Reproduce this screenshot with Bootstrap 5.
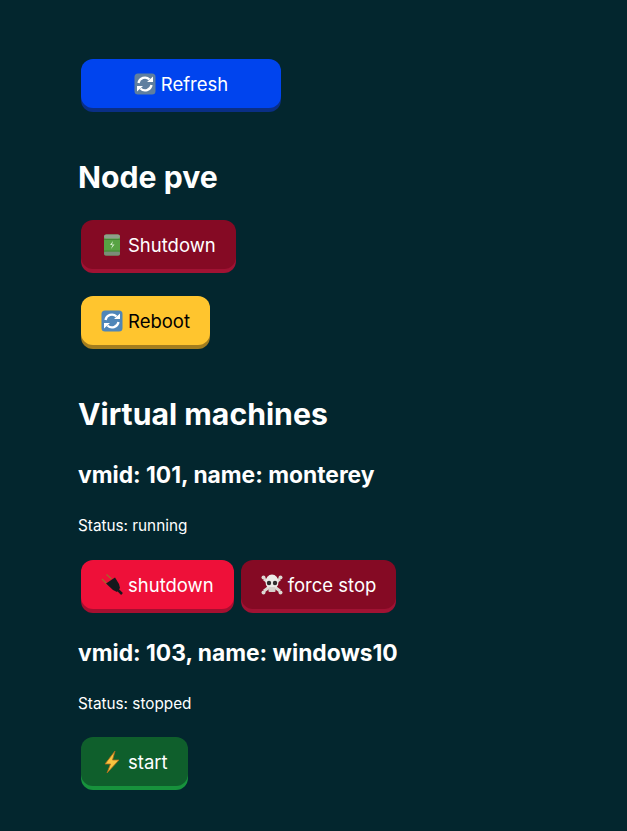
<!DOCTYPE html>
<html lang="en">
<head>
<meta charset="utf-8">
<title>Proxmox</title>
<link href="https://cdn.jsdelivr.net/npm/bootstrap@5.3.0/dist/css/bootstrap.min.css" rel="stylesheet">
<style>
html,body{height:100%}
body{background:#03262e;color:#fff;font-family:Inter,"Liberation Sans",sans-serif;}
.page-wrap{padding:59px 0 0 78px}
.act-row{display:flex;gap:7px;padding-left:3px}
.act{display:inline-flex;align-items:center;justify-content:center;gap:5px;height:49px;padding:0 20px;border:0;border-radius:12px;font-size:18.5px;font-weight:430;color:#fff;line-height:1}
.act span{position:relative;top:1px}
.act svg{width:22px;height:22px;flex:none}
.act-wide{width:200px}
.act-blue,.act-blue:hover{background:#0044ee;color:#fff;box-shadow:0 4px 0 #0a2f86}
.act-maroon,.act-maroon:hover{background:#850a24;color:#fff;box-shadow:0 4px 0 #a01233}
.act-yellow,.act-yellow:hover{background:#ffc52e;color:#000;box-shadow:0 4px 0 #a37d1e}
.act-red,.act-red:hover{background:#ee1039;color:#fff;box-shadow:0 4px 0 #a60f30}
.act-green,.act-green:hover{background:#0f5f2c;color:#fff;box-shadow:0 4px 0 #17923c}
.head-a{font-size:30.2px;font-weight:700;line-height:36px;margin:0}
.head-b{font-size:22.8px;font-weight:700;line-height:28px;margin:0}
.stat{font-size:15.3px;line-height:20px;margin:0}
.mt-a{margin-top:51px}.mt-b{margin-top:25px}.mt-c{margin-top:27px}
.mt-d{margin-top:51px}.mt-e{margin-top:29px}.mt-f{margin-top:27px}.mt-g{margin-top:24px}.mt-h{margin-top:30px}.mt-i{margin-top:23px}
</style>
</head>
<body>
<div class="page-wrap">
  <div class="act-row">
    <button type="button" class="btn act act-wide act-blue"><svg viewBox="0 0 22 22"><rect x="0.500" y="0.500" width="21" height="21" rx="3.500" fill="#5f7f9f"/><path d="M4.500 10a6.500 6.500 0 0 1 11-3.500" fill="none" stroke="#fff" stroke-width="2.300"/><path d="M17.500 12a6.500 6.500 0 0 1-11 3.500" fill="none" stroke="#fff" stroke-width="2.300"/><path d="M13 9h6V3.500zM9 13H3v5.500z" fill="#fff"/></svg><span>Refresh</span></button>
  </div>
  <h2 class="head-a mt-a">Node pve</h2>
  <div class="act-row mt-b">
    <button type="button" class="btn act act-maroon"><svg viewBox="0 0 22 22"><rect x="3" y="0.500" width="16" height="21" rx="2.500" fill="#58a344"/><rect x="3" y="0.500" width="16" height="4" rx="2" fill="#8f9f8c"/><rect x="3" y="17.500" width="16" height="4" rx="2" fill="#7b8c78"/><path d="M3 5.500h16M3 17h16" stroke="#3f7f33" stroke-width=".8"/><path d="M12 7 9 11h2.500L10 15l3.500-4.500H11z" fill="#d8f0d0"/></svg><span>Shutdown</span></button>
  </div>
  <div class="act-row mt-c">
    <button type="button" class="btn act act-yellow"><svg viewBox="0 0 22 22"><rect x="0.500" y="0.500" width="21" height="21" rx="3.500" fill="#4f86b8"/><path d="M4.500 10a6.500 6.500 0 0 1 11-3.500" fill="none" stroke="#fff" stroke-width="2.300"/><path d="M17.500 12a6.500 6.500 0 0 1-11 3.500" fill="none" stroke="#fff" stroke-width="2.300"/><path d="M13 9h6V3.500zM9 13H3v5.500z" fill="#fff"/></svg><span>Reboot</span></button>
  </div>
  <h2 class="head-a mt-d">Virtual machines</h2>
  <h3 class="head-b mt-e">vmid: 101, name: monterey</h3>
  <p class="stat mt-f">Status: running</p>
  <div class="act-row mt-g">
    <button type="button" class="btn act act-red"><svg viewBox="0 0 22 22"><path d="M6.500 10.500 1 5M10.500 5 5.500 .5" stroke="#a8622c" stroke-width="1.500" fill="none"/><path d="M5 9.500 14 3.500 18 10l1 4-3 4-4-2z" fill="#15181c"/><path d="M16 15l5 5" stroke="#15181c" stroke-width="2.500"/></svg><span>shutdown</span></button>
    <button type="button" class="btn act act-maroon"><svg viewBox="0 0 22 22"><path d="M3 5 19 17M19 5 3 17" stroke="#dcd8d2" stroke-width="3"/><circle cx="2.500" cy="3.500" r="2" fill="#dcd8d2"/><circle cx="19.500" cy="3.500" r="2" fill="#dcd8d2"/><circle cx="2.500" cy="18.500" r="2" fill="#dcd8d2"/><circle cx="19.500" cy="18.500" r="2" fill="#dcd8d2"/><ellipse cx="11" cy="8" rx="6.500" ry="7.500" fill="#ecebe8"/><rect x="7.500" y="13" width="7" height="5" rx="1" fill="#d5d0ca"/><circle cx="8" cy="9" r="2.200" fill="#2d2d2d"/><circle cx="14" cy="9" r="2.200" fill="#2d2d2d"/></svg><span>force stop</span></button>
  </div>
  <h3 class="head-b mt-h">vmid: 103, name: windows10</h3>
  <p class="stat mt-f">Status: stopped</p>
  <div class="act-row mt-i">
    <button type="button" class="btn act act-green"><svg viewBox="0 0 22 22"><path d="M14 0 4 13h5.500L6 22 18 9h-6.500z" fill="#f9c440" stroke="#b36a1c" stroke-width=".8"/></svg><span>start</span></button>
  </div>
</div>
</body>
</html>
